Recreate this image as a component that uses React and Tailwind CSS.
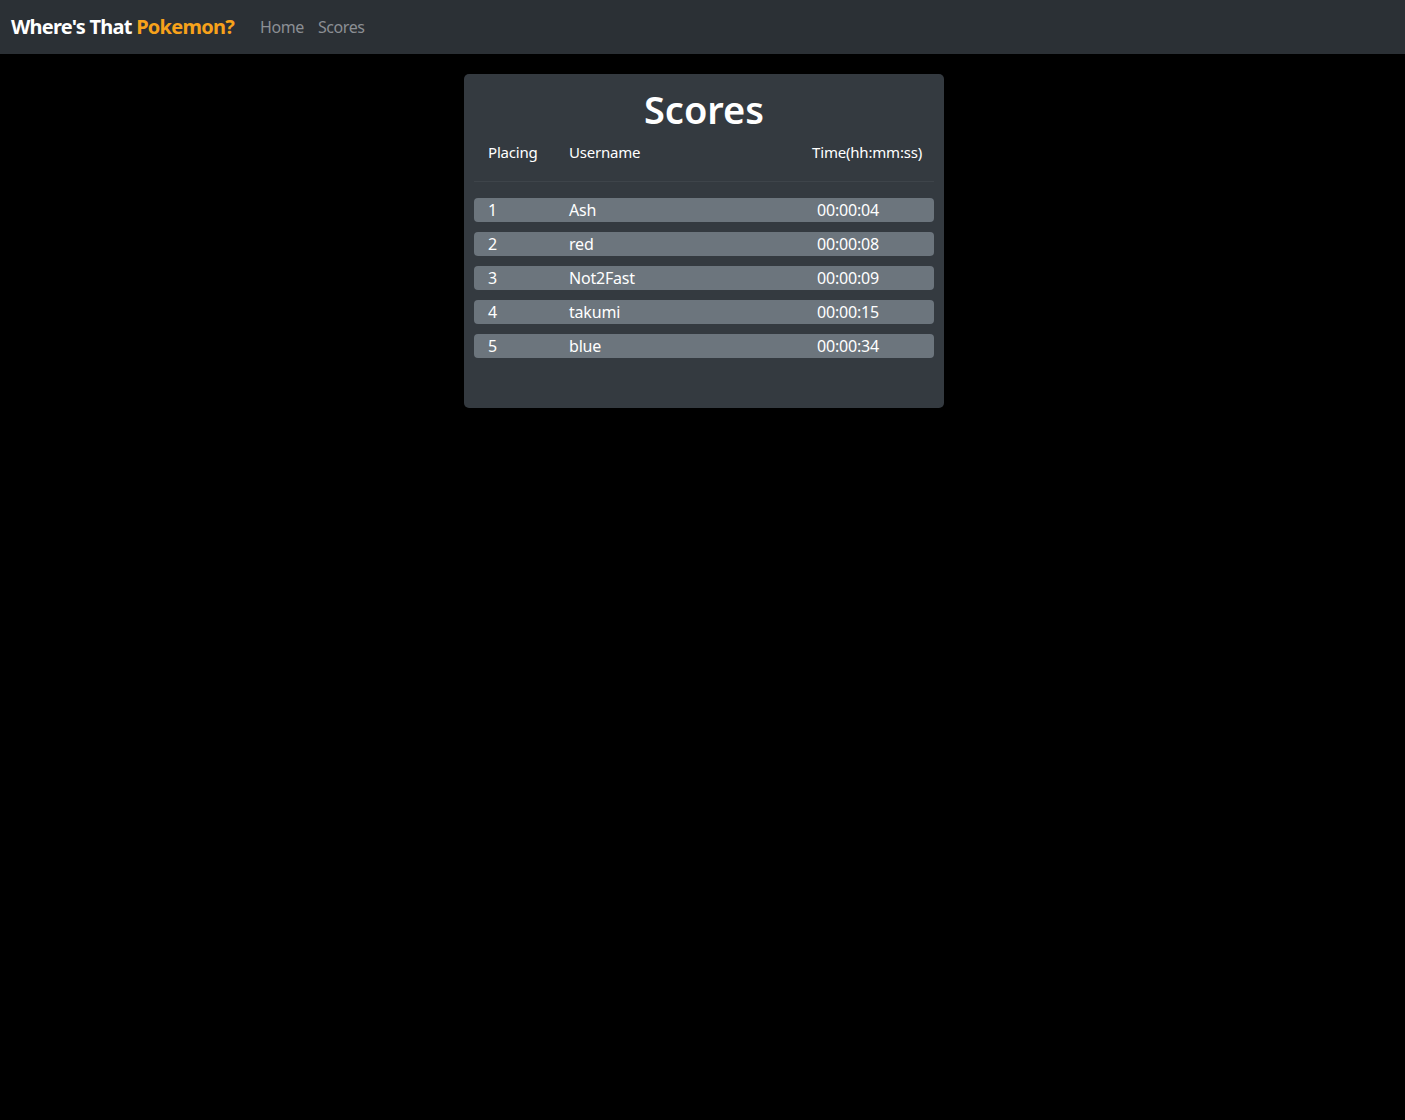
import React from 'react';

const scores = [
  { place: 1, name: 'Ash', time: '00:00:04' },
  { place: 2, name: 'red', time: '00:00:08' },
  { place: 3, name: 'Not2Fast', time: '00:00:09' },
  { place: 4, name: 'takumi', time: '00:00:15' },
  { place: 5, name: 'blue', time: '00:00:34' },
];

const Navbar = () => (
  <nav className="h-[54px] bg-[#2b3035] flex items-center pl-[11px]">
    <span className="text-[20px] font-bold text-white tracking-[-0.75px]">
      Where's That <span className="text-[#f7a21b]">Pokemon?</span>
    </span>
    <div className="flex items-center ml-[26px] gap-[14px] text-[16px] text-[#8b8f94] tracking-[-0.4px]">
      <a href="#">Home</a>
      <a href="#">Scores</a>
    </div>
  </nav>
);

const ScoreRow = ({ place, name, time }) => (
  <div className="flex items-center h-[24px] rounded-[4px] bg-[#6c757d] text-white text-[16px] tracking-[-0.2px] pl-[14px]">
    <span className="w-[81px]">{place}</span>
    <span className="w-[248px]">{name}</span>
    <span>{time}</span>
  </div>
);

export default function App() {
  return (
    <div className="min-h-[1120px] bg-black" style={{ fontFamily: '"Noto Sans", "Open Sans", sans-serif' }}>
      <Navbar />
      <main className="flex justify-center pt-[20px] pl-[3px]">
        <div className="w-[480px] h-[334px] bg-[#343a40] rounded-[5px] px-[10px]">
          <h1 className="text-center text-white text-[38px] font-semibold leading-none pt-[16px]">Scores</h1>
          <div className="flex items-center text-white text-[15px] tracking-[-0.2px] mt-[12px] pl-[14px] pr-[12px] h-[24px]">
            <span className="w-[81px]">Placing</span>
            <span className="flex-1">Username</span>
            <span>Time(hh:mm:ss)</span>
          </div>
          <div className="mt-[17px] border-t border-[#3e444a]" />
          <div className="flex flex-col gap-[10px] mt-[16px]">
            {scores.map((s) => (
              <ScoreRow key={s.place} {...s} />
            ))}
          </div>
        </div>
      </main>
    </div>
  );
}
